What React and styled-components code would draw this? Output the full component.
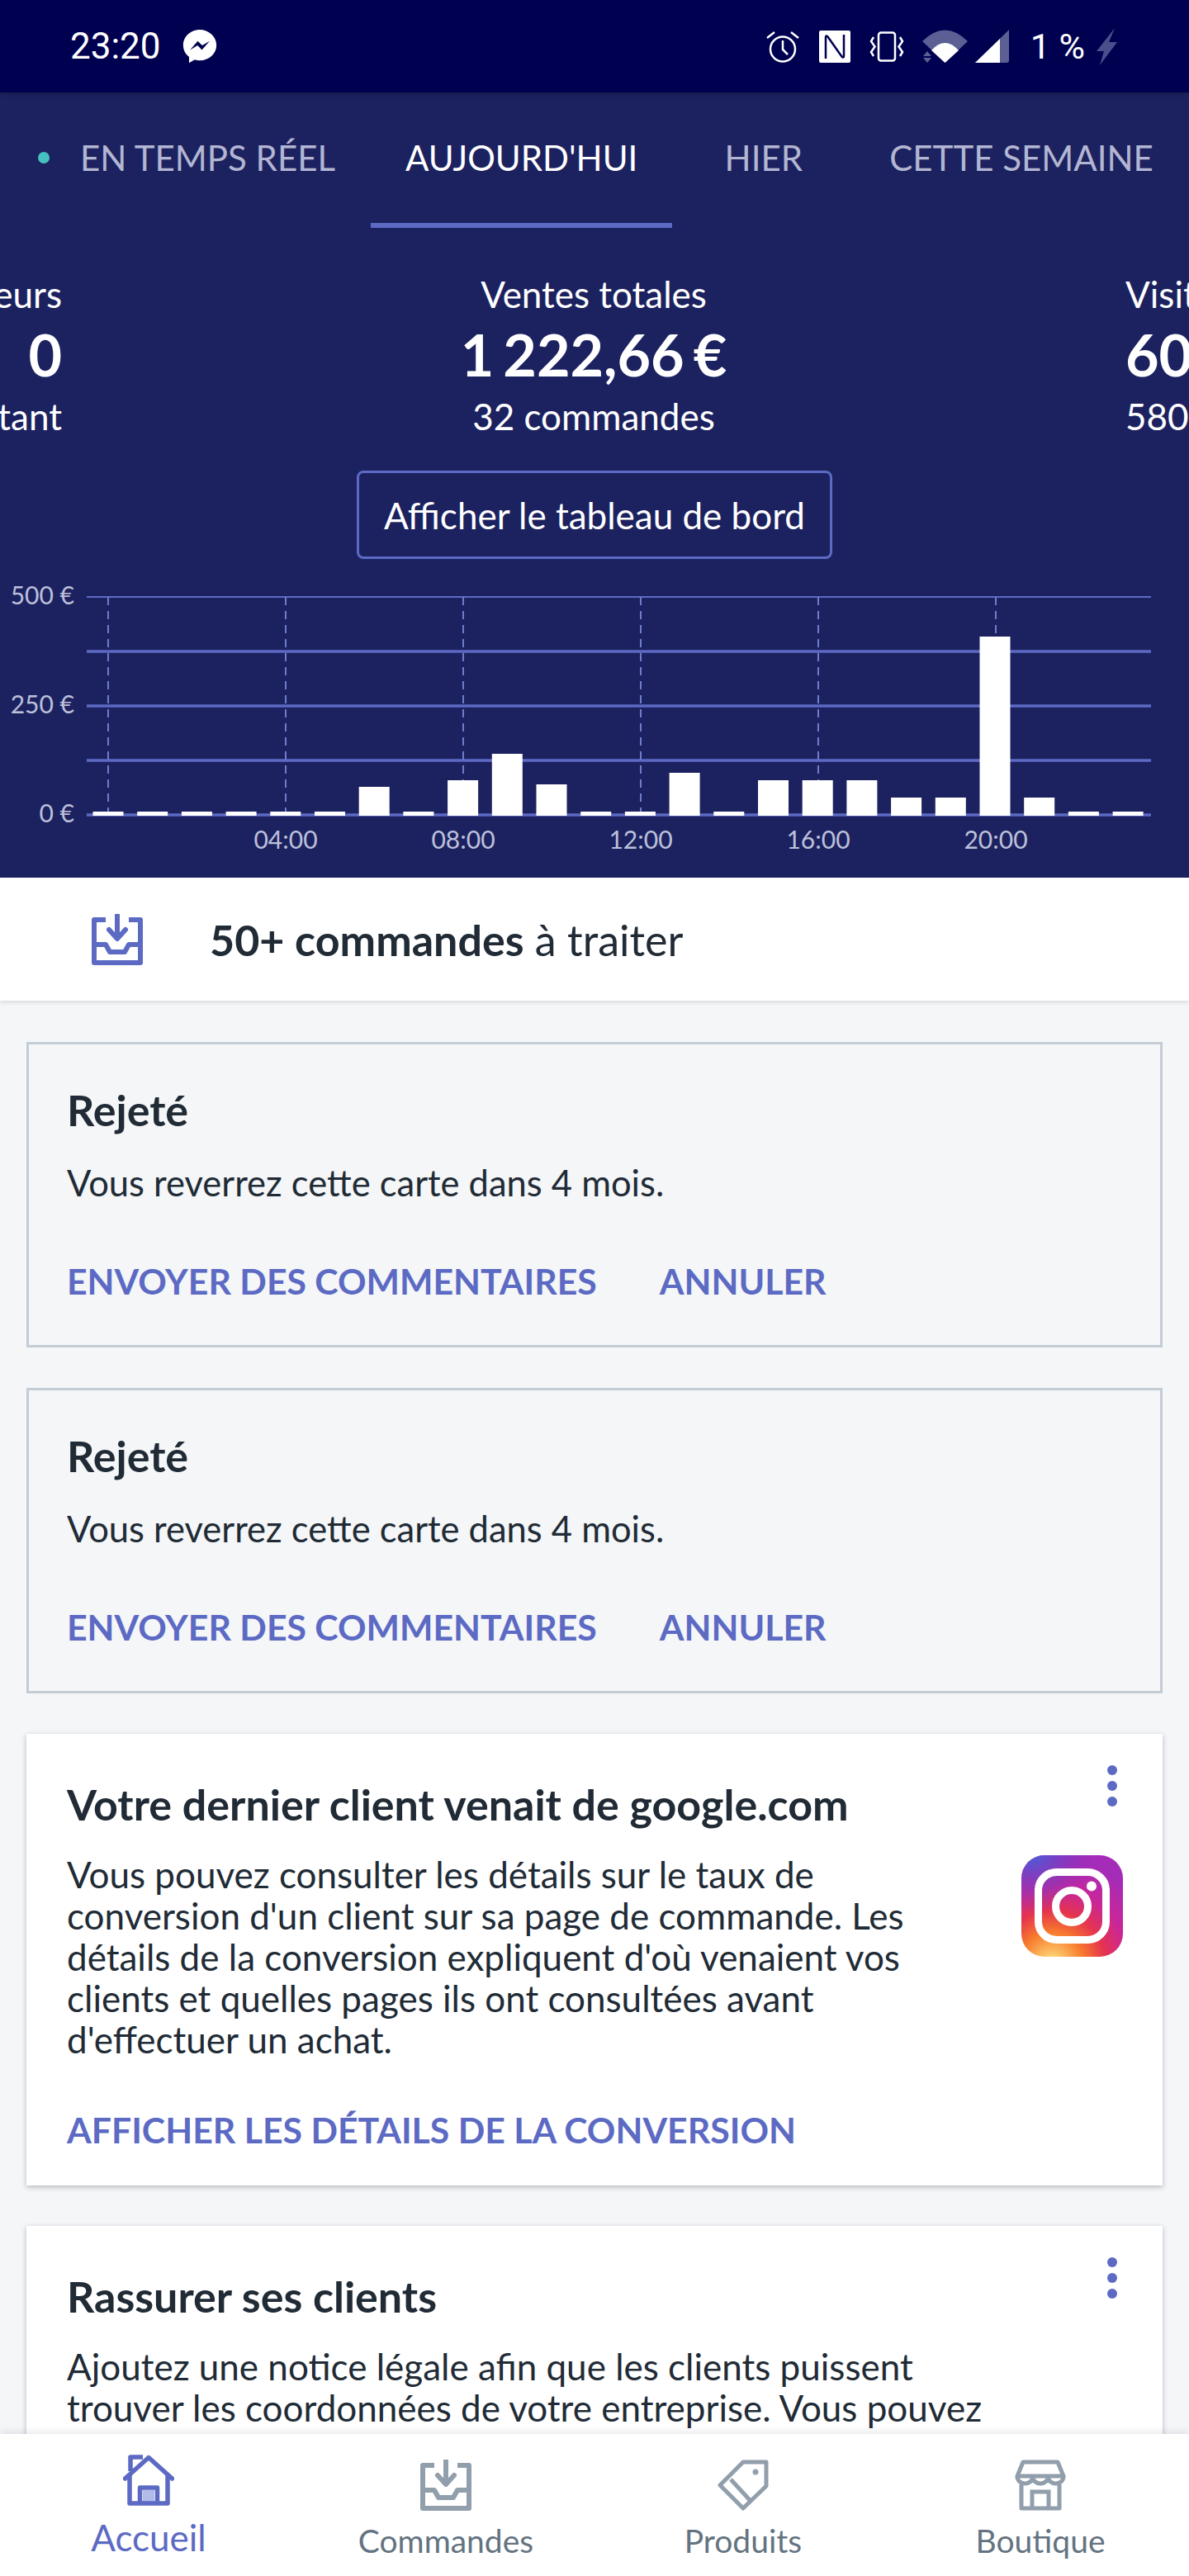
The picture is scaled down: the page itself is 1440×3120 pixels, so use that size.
import React from "react"
import styled, { createGlobalStyle } from "styled-components"

const BARS = [5, 5, 5, 5, 5, 5, 35, 5, 43, 75, 38, 5, 5, 52, 5, 43, 43, 43, 22, 22, 217, 22, 5, 5]
const Y_LABELS = [
  { y: 22, text: "500 €" },
  { y: 154, text: "250 €" },
  { y: 286, text: "0 €" },
]
const HOURS = [
  { x: 346, text: "04:00" },
  { x: 561, text: "08:00" },
  { x: 776, text: "12:00" },
  { x: 991, text: "16:00" },
  { x: 1206, text: "20:00" },
]

const App = () => (
  <Screen>
    <GlobalStyle />
    <StatusBar>
      <StatusGroup>
        <Clock>23:20</Clock>
        <MessengerIcon />
      </StatusGroup>
      <StatusGroup>
        <AlarmIcon />
        <NfcIcon />
        <VibrateIcon />
        <WifiIcon />
        <SignalIcon />
        <Battery>1 %</Battery>
        <BoltIcon />
      </StatusGroup>
    </StatusBar>

    <Scroll>
      <Header>
        <Tabs>
          <Tab $first>
            <LiveDot />
            EN TEMPS RÉEL
          </Tab>
          <Tab $active>AUJOURD'HUI</Tab>
          <Tab>HIER</Tab>
          <Tab>CETTE SEMAINE</Tab>
        </Tabs>
        <Stats>
          <SideStat $left>
            <StatLabel>Visiteurs</StatLabel>
            <StatValue>0</StatValue>
            <StatLabel>à cet instant</StatLabel>
          </SideStat>
          <MainStat>
            <StatLabel>Ventes totales</StatLabel>
            <StatValue>1 222,66 €</StatValue>
            <StatLabel>32 commandes</StatLabel>
          </MainStat>
          <SideStat>
            <StatLabel>Visiteurs</StatLabel>
            <StatValue>604</StatValue>
            <StatLabel>580 sessions</StatLabel>
          </SideStat>
        </Stats>
        <DashboardButton>Afficher le tableau de bord</DashboardButton>
        <Chart />
      </Header>

      <OrdersRow>
        <InboxIcon color="#5c6ac4" />
        <OrdersText>
          <strong>50+ commandes</strong> à traiter
        </OrdersText>
      </OrdersRow>

      <Feed>
        <RejectedCard />
        <RejectedCard />

        <Card>
          <MenuDots />
          <CardTitle>Votre dernier client venait de google.com</CardTitle>
          <CardBodyRow>
            <CardText>
              Vous pouvez consulter les détails sur le taux de conversion d'un client sur sa page de
              commande. Les détails de la conversion expliquent d'où venaient vos clients et quelles
              pages ils ont consultées avant d'effectuer un achat.
            </CardText>
            <InstagramLogo />
          </CardBodyRow>
          <CardActions>
            <ActionLink>AFFICHER LES DÉTAILS DE LA CONVERSION</ActionLink>
          </CardActions>
        </Card>

        <Card>
          <MenuDots />
          <CardTitle>Rassurer ses clients</CardTitle>
          <CardBodyRow>
            <CardText>
              Ajoutez une notice légale afin que les clients puissent trouver les coordonnées de
              votre entreprise. Vous pouvez
            </CardText>
          </CardBodyRow>
        </Card>
      </Feed>
    </Scroll>

    <BottomNav>
      <NavItem $active>
        <HomeIcon />
        <NavLabel $active>Accueil</NavLabel>
      </NavItem>
      <NavItem>
        <InboxIcon color="#919eab" />
        <NavLabel>Commandes</NavLabel>
      </NavItem>
      <NavItem>
        <TagIcon />
        <NavLabel>Produits</NavLabel>
      </NavItem>
      <NavItem>
        <StoreIcon />
        <NavLabel>Boutique</NavLabel>
      </NavItem>
    </BottomNav>
  </Screen>
)

export default App

const RejectedCard = () => (
  <DismissedCard>
    <CardTitle>Rejeté</CardTitle>
    <DismissedText>Vous reverrez cette carte dans 4 mois.</DismissedText>
    <DismissedActions>
      <ActionLink>ENVOYER DES COMMENTAIRES</ActionLink>
      <ActionLink>ANNULER</ActionLink>
    </DismissedActions>
  </DismissedCard>
)

const MenuDots = () => (
  <DotsButton>
    <span />
    <span />
    <span />
  </DotsButton>
)

const Chart = () => (
  <ChartSvg viewBox="0 0 1440 362">
    <line x1="105" x2="1394" y1="22" y2="22" stroke="#5c6ac4" strokeWidth="2" />
    {[88, 154, 220, 286].map((y) => (
      <line key={y} x1="105" x2="1394" y1={y} y2={y} stroke="#5c6ac4" strokeWidth="3.5" />
    ))}
    {[131, 346, 561, 776, 991, 1206].map((x) => (
      <line
        key={x}
        x1={x}
        x2={x}
        y1="22"
        y2="286"
        stroke="#6f7bcc"
        strokeWidth="2"
        strokeDasharray="10 7"
      />
    ))}
    {BARS.map((h, i) => (
      <rect key={i} x={112.5 + i * 53.7} y={287 - h} width="37" height={h} fill="#fff" />
    ))}
    {Y_LABELS.map((l) => (
      <ChartText key={l.text} x="90" y={l.y + 9} textAnchor="end">
        {l.text}
      </ChartText>
    ))}
    {HOURS.map((h) => (
      <ChartText key={h.text} x={h.x} y="327" textAnchor="middle">
        {h.text}
      </ChartText>
    ))}
  </ChartSvg>
)

const MessengerIcon = () => (
  <svg width="46" height="46" viewBox="0 0 24 24" style={{ marginLeft: 24 }}>
    <path
      fill="#fff"
      d="M12 1.5C6.2 1.5 1.5 5.9 1.5 11.3c0 3 1.4 5.6 3.7 7.4v3.8l3.5-2c1 .3 2.1.5 3.3.5 5.8 0 10.5-4.4 10.5-9.7S17.8 1.500 12 1.500z"
    />
    <path fill="#000051" d="M5.800 14.300l4.900-5.600 2.800 2.800 4.700-2.800-4.900 5.600-2.700-2.800z" />
  </svg>
)

const AlarmIcon = () => (
  <svg width="40" height="40" viewBox="0 0 40 40" fill="none" stroke="#fff" strokeWidth="2.5">
    <circle cx="20" cy="23.500" r="15" />
    <path d="M20 13v11l6 6M1 10l9-7M39 10l-9-7" />
  </svg>
)

const NfcIcon = () => (
  <svg width="38" height="39" viewBox="0 0 38 39" style={{ marginLeft: 24 }}>
    <rect width="38" height="39" rx="2" fill="#fff" />
    <path
      d="M8 34V8c0-2 1.500-2 2.500-.5L25 28M30 5v26c0 2-1.500 2-2.500.5L13 11"
      fill="none"
      stroke="#000051"
      strokeWidth="2.500"
    />
  </svg>
)

const VibrateIcon = () => (
  <svg
    width="42"
    height="37"
    viewBox="0 0 42 37"
    fill="none"
    stroke="#fff"
    strokeWidth="2.500"
    style={{ marginLeft: 23 }}
  >
    <rect x="11" y="1.500" width="20" height="34" rx="3" />
    <path d="M5 7 2 12l4.500 6.500L2 25l3 5M37 7l3 5-4.500 6.500L40 25l-3 5" />
  </svg>
)

const WifiIcon = () => (
  <svg width="55" height="40" viewBox="0 0 55 40" style={{ marginLeft: 22 }}>
    <path fill="#5c5f94" d="M0 14Q27.500-13 55 14L27.500 40Z" />
    <path fill="#fff" d="M11 25Q27.500 7 44 25L27.500 40Z" />
    <path fill="#5c5f94" d="M1 32l5-6 5 6zM1 34h10l-5 6z" />
  </svg>
)

const SignalIcon = () => (
  <svg width="41" height="40" viewBox="0 0 41 40" style={{ marginLeft: 9 }}>
    <path fill="#5c5f94" d="M0 40 41 0v37q0 3-3 3z" />
    <path fill="#fff" d="M0 40 30 11v29z" />
  </svg>
)

const BoltIcon = () => (
  <svg width="26" height="45" viewBox="0 0 26 45" style={{ marginLeft: 14 }}>
    <path fill="#4a4e8c" d="M22 0 0 28h9L4 45 25 17H15z" />
  </svg>
)

const InboxIcon = ({ color }) => (
  <svg width="62" height="62" viewBox="0 0 62 62" fill="none" stroke={color} strokeWidth="6">
    <path d="M17 7H3v52h56V7H45" strokeLinejoin="round" />
    <path d="M3 37h14l5 9h18l5-9h14" strokeLinejoin="round" />
    <path d="M31 0v29M21 19l10 11 10-11" strokeLinecap="round" strokeLinejoin="round" />
  </svg>
)

const HomeIcon = () => (
  <svg width="62" height="62" viewBox="0 0 62 62" fill="none" stroke="#5c6ac4" strokeWidth="5.500">
    <rect x="24" y="43" width="14" height="14" fill="#b3bce8" stroke="none" />
    <path d="M2.500 29 31 3.500 59.500 29" strokeLinecap="round" strokeLinejoin="round" />
    <path d="M8 24v35h46V24M9 20V3h15" strokeLinejoin="round" />
    <path d="M20.500 59V40h21v19" strokeLinejoin="round" />
  </svg>
)

const TagIcon = () => (
  <svg width="62" height="62" viewBox="0 0 62 62" fill="none" stroke="#919eab" strokeWidth="5">
    <path d="M31 3h28v29L31 59 3 31Z" strokeLinejoin="round" />
    <path d="M16 24l23 25" />
    <circle cx="46" cy="15" r="3.500" fill="#919eab" stroke="none" />
  </svg>
)

const StoreIcon = () => (
  <svg width="62" height="62" viewBox="0 0 62 62" fill="none" stroke="#919eab" strokeWidth="5">
    <path d="M10 3h42l7 17H3Z" strokeLinejoin="round" />
    <path d="M3 20c0 12 18.700 12 18.700 0 0 12 18.600 12 18.600 0 0 12 18.700 12 18.700 0" />
    <path d="M8 30v29h46V30" strokeLinejoin="round" />
    <path d="M21 59V39h20v20" />
  </svg>
)

const InstagramLogo = () => (
  <LogoSvg viewBox="0 0 123 123">
    <defs>
      <radialGradient id="igWarm" cx="0.3" cy="1.07" r="1.05">
        <stop offset="0" stopColor="#fdf497" />
        <stop offset="0.1" stopColor="#fdc468" />
        <stop offset="0.3" stopColor="#f77a2c" />
        <stop offset="0.5" stopColor="#e5334f" />
        <stop offset="0.72" stopColor="#c9269a" />
        <stop offset="1" stopColor="#a42cb8" />
      </radialGradient>
      <radialGradient id="igCool" cx="0.12" cy="-0.02" r="0.6">
        <stop offset="0" stopColor="#4a5fd6" />
        <stop offset="1" stopColor="#7a2cc0" stopOpacity="0" />
      </radialGradient>
    </defs>
    <rect width="123" height="123" rx="28" fill="url(#igWarm)" />
    <rect width="123" height="123" rx="28" fill="url(#igCool)" />
    <rect x="20.500" y="20.500" width="82" height="82" rx="22" fill="none" stroke="#fff" strokeWidth="9" />
    <circle cx="61" cy="62" r="19.500" fill="none" stroke="#fff" strokeWidth="9" />
    <circle cx="85" cy="37.500" r="6" fill="#fff" />
  </LogoSvg>
)

const GlobalStyle = createGlobalStyle`
  html,
  body {
    margin: 0;
    padding: 0;
  }
  body {
    font-family: Lato, "Noto Sans", sans-serif;
    color: #212b36;
  }
`

const Screen = styled.div`
  width: 1440px;
  height: 3120px;
  display: flex;
  flex-direction: column;
  overflow: hidden;
  background: #f4f6f8;
`

const StatusBar = styled.div`
  position: relative;
  z-index: 1;
  flex: none;
  height: 112px;
  padding: 0 86px 0 85px;
  display: flex;
  justify-content: space-between;
  align-items: center;
  background: #000051;
  box-shadow: 0 2px 6px rgba(0, 0, 0, 0.2);
  box-sizing: border-box;
`

const StatusGroup = styled.div`
  display: flex;
  align-items: center;
`

const Clock = styled.span`
  font-family: Roboto, sans-serif;
  font-size: 44px;
  color: #fff;
`

const Battery = styled.span`
  margin-left: 26px;
  font-family: Roboto, sans-serif;
  font-size: 43px;
  color: #fff;
`

const Scroll = styled.div`
  flex: 1;
  min-height: 0;
  overflow: hidden;
`

const Header = styled.div`
  background: #1c2260;
  display: flex;
  flex-direction: column;
  align-items: center;
`

const Tabs = styled.div`
  align-self: stretch;
  height: 164px;
  display: flex;
  overflow: hidden;
`

const Tab = styled.div`
  flex: none;
  box-sizing: border-box;
  min-width: 221px;
  padding: ${(props) => (props.$first ? "0 43px 0 46px" : "0 42px")};
  display: flex;
  align-items: center;
  justify-content: center;
  font-size: 42px;
  color: ${(props) => (props.$active ? "#fff" : "#b3b6d2")};
  border-bottom: 6px solid ${(props) => (props.$active ? "#5c6ac4" : "transparent")};
`

const LiveDot = styled.span`
  width: 14px;
  height: 14px;
  margin-right: 37px;
  border-radius: 50%;
  background: #47c1bf;
`

const Stats = styled.div`
  align-self: stretch;
  margin-top: 55px;
  display: grid;
  grid-template-columns: 75px 1fr 77px;
  overflow: hidden;
`

const SideStat = styled.div`
  display: flex;
  flex-direction: column;
  align-items: ${(props) => (props.$left ? "flex-end" : "flex-start")};
  overflow: hidden;
  white-space: nowrap;
  color: #fff;
`

const MainStat = styled.div`
  display: flex;
  flex-direction: column;
  align-items: center;
  color: #fff;
`

const StatLabel = styled.div`
  font-size: 44px;
  line-height: 50px;
`

const StatValue = styled.div`
  margin: 8px 0 10px;
  font-size: 70px;
  line-height: 80px;
  font-weight: 700;
  word-spacing: -6px;
`

const DashboardButton = styled.button`
  margin: 41px 0 24px;
  width: 576px;
  height: 107px;
  border: 3px solid #5c6ac4;
  border-radius: 8px;
  background: transparent;
  font-family: inherit;
  font-size: 44px;
  color: #fff;
`

const ChartSvg = styled.svg`
  display: block;
  width: 1440px;
  height: 362px;
`

const ChartText = styled.text`
  font-family: Lato, sans-serif;
  font-size: 30px;
  fill: #bcc0da;
`

const OrdersRow = styled.div`
  position: relative;
  height: 149px;
  padding-left: 111px;
  display: flex;
  align-items: center;
  gap: 81px;
  background: #fff;
  box-shadow: 0 2px 5px rgba(33, 43, 54, 0.14);
  box-sizing: border-box;
`

const OrdersText = styled.div`
  font-size: 52px;
  color: #212b36;
  strong {
    font-weight: 700;
  }
`

const Feed = styled.div`
  padding: 50px 32px 0;
  display: flex;
  flex-direction: column;
  gap: 49px;
`

const DismissedCard = styled.div`
  height: 370px;
  box-sizing: border-box;
  padding: 49px 46px 0;
  border: 3px solid #c4cdd5;
`

const DismissedText = styled.div`
  margin-top: 33px;
  font-size: 43.5px;
  line-height: 50px;
`

const DismissedActions = styled.div`
  margin-top: 70px;
  display: flex;
  gap: 76px;
`

const Card = styled.div`
  position: relative;
  padding: 55px 48px 42px 49px;
  background: #fff;
  box-shadow: 0 2px 6px rgba(33, 43, 54, 0.3);
`

const CardTitle = styled.div`
  font-size: 52px;
  line-height: 60px;
  font-weight: 700;
  color: #212b36;
`

const CardBodyRow = styled.div`
  margin-top: 30px;
  display: flex;
  justify-content: space-between;
  align-items: flex-start;
`

const CardText = styled.div`
  width: 1120px;
  font-size: 44px;
  line-height: 50px;
`

const CardActions = styled.div`
  margin-top: 60px;
`

const ActionLink = styled.span`
  font-size: 42.8px;
  line-height: 50px;
  font-weight: 700;
  color: #5c6ac4;
`

const LogoSvg = styled.svg`
  flex: none;
  width: 123px;
  height: 123px;
  margin-top: 2px;
`

const DotsButton = styled.div`
  position: absolute;
  top: 38px;
  right: 55px;
  display: flex;
  flex-direction: column;
  gap: 7px;
  span {
    width: 12px;
    height: 12px;
    border-radius: 50%;
    background: #5c6ac4;
  }
`

const BottomNav = styled.div`
  position: relative;
  flex: none;
  height: 172px;
  display: grid;
  grid-template-columns: repeat(4, 1fr);
  background: #fff;
  box-shadow: 0 -3px 8px rgba(33, 43, 54, 0.1);
`

const NavItem = styled.div`
  padding-top: ${(props) => (props.$active ? "25px" : "31px")};
  display: flex;
  flex-direction: column;
  align-items: center;
`

const NavLabel = styled.div`
  margin-top: ${(props) => (props.$active ? "13px" : "11px")};
  font-size: ${(props) => (props.$active ? "44px" : "39px")};
  line-height: 50px;
  color: ${(props) => (props.$active ? "#5c6ac4" : "#637381")};
`
